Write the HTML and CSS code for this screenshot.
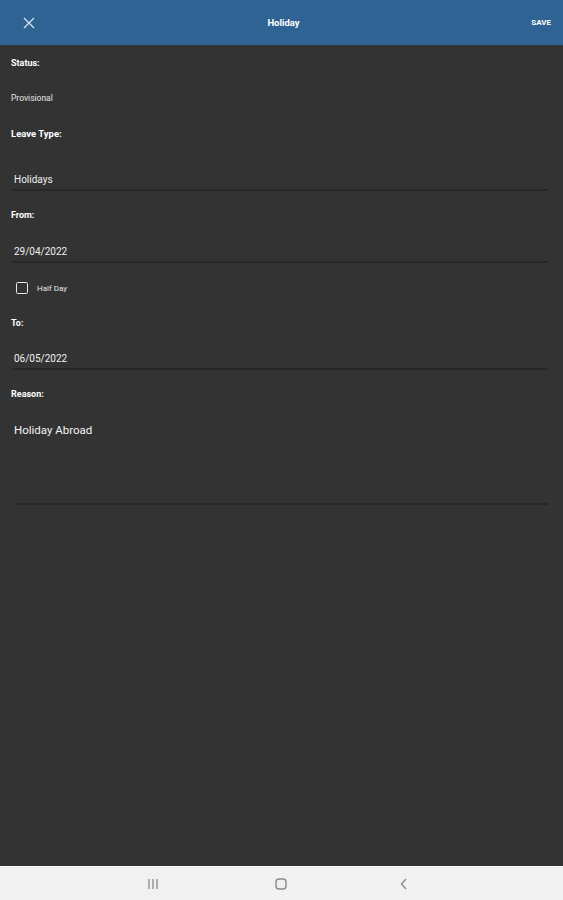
FILE: index.html
```html
<!DOCTYPE html>
<html>
<head>
<meta charset="utf-8">
<link rel="stylesheet" href="styles.css">
</head>
<body>
<div class="screen">
  <header class="appbar">
    <svg class="close" width="12" height="12" viewBox="0 0 12 12"><path d="M1 1 L11 11 M11 1 L1 11" stroke="#d3dfec" stroke-width="1.4" fill="none"/></svg>
    <div class="title">Holiday</div>
    <div class="save">SAVE</div>
  </header>
  <main class="form">
    <div class="label h-status">Status:</div>
    <div class="value h-prov">Provisional</div>
    <div class="label h-leave">Leave Type:</div>
    <div class="field f-holidays">Holidays</div>
    <div class="label h-from">From:</div>
    <div class="field f-from">29/04/2022</div>
    <div class="check-row">
      <span class="checkbox"></span>
      <span class="check-label">Half Day</span>
    </div>
    <div class="label h-to">To:</div>
    <div class="field f-to">06/05/2022</div>
    <div class="label h-reason">Reason:</div>
    <div class="textarea">Holiday Abroad</div>
  </main>
  <nav class="navbar">
    <svg width="14" height="12" viewBox="0 0 14 12"><path d="M3 1 V11 M7 1 V11 M11 1 V11" stroke="#8a8a8a" stroke-width="1.3"/></svg>
    <svg width="14" height="14" viewBox="0 0 14 14"><rect x="2" y="2" width="10" height="10" rx="3" stroke="#8a8a8a" stroke-width="1.4" fill="none"/></svg>
    <svg width="12" height="14" viewBox="0 0 12 14"><path d="M8 2 L3.5 7 L8 12" stroke="#8a8a8a" stroke-width="1.4" fill="none"/></svg>
  </nav>
</div>
</body>
</html>
```

FILE: styles.css
```css
* { box-sizing: border-box; }
html, body { margin: 0; padding: 0; }
body {
  font-family: Roboto, "Liberation Sans", sans-serif;
  background: #333333;
  color: #eeeeee;
}
.screen {
  display: flex;
  flex-direction: column;
  height: 900px;
  width: 563px;
}
.appbar {
  height: 45px;
  background: #2f6394;
  display: flex;
  align-items: center;
  position: relative;
  flex: none;
}
.close { margin-left: 23px; }
.title {
  position: absolute;
  left: 0; right: 0;
  text-align: center;
  font-weight: bold;
  font-size: 9.5px;
  color: #ffffff;
  padding-left: 4px;
}
.save {
  margin-left: auto;
  margin-right: 12px;
  font-weight: bold;
  font-size: 8px;
  color: #ffffff;
}
.form {
  flex: 1;
  background: #333333;
  padding-left: 11px;
}
.label {
  font-weight: bold;
  font-size: 9px;
  color: #ffffff;
}
.value { font-size: 8.5px; color: #e6e6e6; }
.h-status { height: 36px; line-height: 36px; }
.h-prov { height: 34px; line-height: 34px; }
.h-leave { height: 38px; line-height: 38px; font-size: 9.5px; }
.h-from { height: 48px; line-height: 48px; }
.h-to { height: 20px; line-height: 20px; }
.h-reason { height: 48px; line-height: 48px; }
.field {
  margin-left: 1px;
  margin-right: 15px;
  padding-left: 2px;
  line-height: 18px;
  font-size: 10px;
  color: #f0f0f0;
  border-bottom: 2px solid #282828;
}
.f-holidays { padding-top: 18px; }
.f-from { padding-top: 4px; }
.f-to { padding-top: 17px; }
.check-row {
  height: 50px;
  display: flex;
  align-items: center;
}
.checkbox {
  width: 12px;
  height: 12px;
  border: 1.6px solid #e8e8e8;
  border-radius: 1.5px;
  margin-left: 5px;
}
.check-label {
  margin-left: 9px;
  font-size: 8px;
  color: #e6e6e6;
}
.textarea {
  margin-left: 5px;
  margin-right: 15px;
  padding-top: 2px;
  height: 87px;
  line-height: 20px;
  font-size: 11.5px;
  color: #f2f2f2;
  border-bottom: 2px solid #282828;
  text-indent: -2px;
}
.navbar {
  flex: none;
  height: 34px;
  background: #f1f1f1;
  border-top: 1px solid #fafafa;
  display: flex;
  align-items: center;
  padding-left: 146px;
}
.navbar svg:nth-child(1) { margin-right: 114px; }
.navbar svg:nth-child(2) { margin-right: 110px; }
```
